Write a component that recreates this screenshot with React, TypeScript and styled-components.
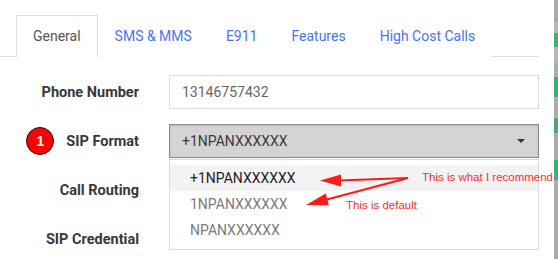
import styled, { createGlobalStyle } from 'styled-components';

const GlobalStyle = createGlobalStyle`
  html, body {
    margin: 0;
    padding: 0;
    background: #fff;
  }
  body {
    font-family: Roboto, "Noto Sans", sans-serif;
    font-size: 14px;
    color: #333;
  }
`;

const tabs = ['General', 'SMS & MMS', 'E911', 'Features', 'High Cost Calls'];

const formats = [
  { label: '+1NPANXXXXXX', current: true },
  { label: '1NPANXXXXXX', current: false },
  { label: 'NPANXXXXXX', current: false },
];

const App: React.FC = () => {
  return (
    <>
      <GlobalStyle />
      <Page>
        <Main>
          <TabBar>
            {tabs.map((t, i) => (
              <Tab key={t} active={i === 0}>
                {t}
              </Tab>
            ))}
          </TabBar>

          <Form>
            <Label>Phone Number</Label>
            <Field>
              <TextInput>13146757432</TextInput>
            </Field>

            <Label>
              <Badge>1</Badge>
              SIP Format
            </Label>
            <Field>
              <Select>
                +1NPANXXXXXX
                <Caret />
              </Select>
              <Menu>
                {formats.map((f) => (
                  <Option key={f.label} current={f.current}>
                    {f.label}
                  </Option>
                ))}
              </Menu>
            </Field>

            <Label>Call Routing</Label>
            <Field />

            <Label>SIP Credential</Label>
            <Field />
          </Form>

          <Arrows width="539" height="259" viewBox="0 0 539 259">
            <line x1="408" y1="178" x2="338" y2="180.5" stroke="#ff1a1a" strokeWidth="2" />
            <polygon points="320,180.5 341,174.5 341,186.5" fill="#ff1a1a" />
            <line x1="408" y1="178" x2="325" y2="200" stroke="#ff1a1a" strokeWidth="2" />
            <polygon points="306,205 325.8,193.6 328.8,205.2" fill="#ff1a1a" />
          </Arrows>
          <Note x={422} y={170}>This is what I recommend</Note>
          <Note x={346} y={198}>This is default</Note>
        </Main>
        <Strip />
      </Page>
    </>
  );
};

const Page = styled.div`
  display: flex;
  justify-content: space-between;
  width: 558px;
  height: 259px;
  overflow: hidden;
`;

const Main = styled.div`
  position: relative;
  width: 539px;
`;

const TabBar = styled.div`
  display: flex;
  padding: 15px 0 0 16px;
  height: 41px;
  border-bottom: 1px solid #dcdcdc;
`;

const Tab = styled.div<{ active?: boolean }>`
  box-sizing: border-box;
  display: flex;
  align-items: center;
  height: 42px;
  margin-bottom: -1px;
  padding: 0 16px 1px;
  background: #fff;
  border: 1px solid ${(p) => (p.active ? '#dcdcdc' : 'transparent')};
  border-bottom: none;
  color: ${(p) => (p.active ? '#555' : '#4a72f5')};
  font-size: 14px;
  white-space: nowrap;
`;

const Form = styled.div`
  display: grid;
  grid-template-columns: 139px 370px;
  grid-auto-rows: 34px;
  column-gap: 30px;
  row-gap: 15px;
  padding-top: 18px;
`;

const Label = styled.div`
  display: flex;
  align-items: center;
  justify-content: flex-end;
  gap: 12px;
  font-size: 14.5px;
  font-weight: 700;
  color: #383838;
  white-space: nowrap;
`;

const Badge = styled.span`
  box-sizing: border-box;
  display: flex;
  align-items: center;
  justify-content: center;
  width: 28px;
  height: 28px;
  border-radius: 50%;
  background: #f00;
  border: 1.5px solid #111;
  color: #fff;
  font-family: "Liberation Sans", Arial, sans-serif;
  font-size: 14px;
  font-weight: 700;
`;

const Field = styled.div`
  position: relative;
`;

const TextInput = styled.div`
  box-sizing: border-box;
  display: flex;
  align-items: center;
  height: 34px;
  padding: 0 12px;
  border: 1px solid #d6dbe1;
  color: #666;
`;

const Select = styled.div`
  box-sizing: border-box;
  display: flex;
  align-items: center;
  justify-content: space-between;
  height: 34px;
  padding: 0 13px 0 12px;
  background: #d4d4d4;
  border: 1px solid #8a8a8a;
  box-shadow: inset 0 1px 2px rgba(0, 0, 0, 0.12);
  color: #3a3a3a;
`;

const Caret = styled.span`
  width: 0;
  height: 0;
  border-left: 4px solid transparent;
  border-right: 4px solid transparent;
  border-top: 4px solid #333;
`;

const Menu = styled.div`
  position: absolute;
  top: calc(100% + 1px);
  left: 0;
  right: 0;
  z-index: 2;
  padding: 5px 0 6px;
  background: #fff;
  border: 1px solid #d6dbe1;
`;

const Option = styled.div<{ current?: boolean }>`
  display: flex;
  align-items: center;
  height: 26px;
  padding-left: 20px;
  background: ${(p) => (p.current ? '#f3f3f3' : '#fff')};
  color: ${(p) => (p.current ? '#222' : '#7a7a7a')};
`;

const Arrows = styled.svg`
  position: absolute;
  top: 0;
  left: 0;
  z-index: 3;
  pointer-events: none;
  overflow: visible;
`;

const Note = styled.span<{ x: number; y: number }>`
  position: absolute;
  left: ${(p) => p.x}px;
  top: ${(p) => p.y}px;
  z-index: 3;
  font-family: "Liberation Sans", Arial, sans-serif;
  font-size: 11.5px;
  line-height: 14px;
  color: #ff2a2a;
  white-space: nowrap;
`;

const Strip = styled.div`
  width: 4px;
  height: 259px;
  background: linear-gradient(
    to bottom,
    #ababab 0px,
    #ababab 23px,
    #b4b4c6 23px,
    #b4b4c6 33px,
    #3cb36c 33px,
    #3cb36c 47px,
    #b4b4c6 47px,
    #b4b4c6 63px,
    #ababab 63px,
    #ababab 77px,
    #3cb36c 77px,
    #3cb36c 97px,
    #ababab 97px,
    #ababab 118px,
    #3cb36c 118px,
    #3cb36c 133px,
    #ababab 133px,
    #ababab 160px,
    #3cb36c 160px,
    #3cb36c 180px,
    #ababab 180px
  );
`;

export default App;
